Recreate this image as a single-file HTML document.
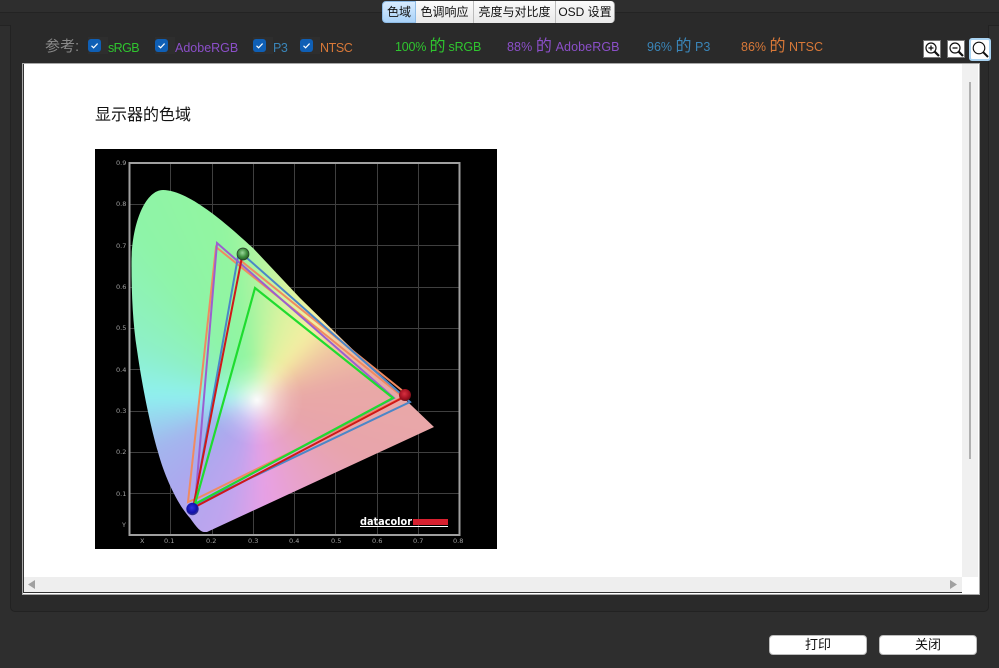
<!DOCTYPE html>
<html lang="zh"><head><meta charset="utf-8"><title>色域</title>
<style>
html,body{margin:0;padding:0;width:999px;height:668px;overflow:hidden;background:#2e2e2e}
*{box-sizing:border-box}
body{font-family:"Liberation Sans","Noto Sans CJK SC",sans-serif;position:relative}
.a{position:absolute}
.t{position:absolute;white-space:nowrap;line-height:16px;font-size:12.5px}
.t b{font-weight:400;font-size:16px}
.halo{position:absolute;top:37px;width:20px;height:17px;background:#2e2e2e}
.cb{position:absolute;top:39px;width:13px;height:13px;background:#0f5fb5;border-radius:3px}
.cb svg{position:absolute;left:0;top:0}
.tab{position:absolute;top:1px;height:22px;background:linear-gradient(#fbfbfb,#e9e9e9);border-right:1px solid #bbb;color:#111;font-size:12px;line-height:22px;text-align:center;white-space:nowrap}
.btn{position:absolute;top:635px;width:98px;height:20px;background:#fff;border:1px solid #bdbdbd;border-radius:4px;color:#111;font-size:13px;line-height:18px;text-align:center}
.zb{position:absolute;background:#fff;border:1px solid #777}
</style></head><body>

<div class="a" style="left:0;top:12px;width:999px;height:14px;background:#2a2a2a;border-top:1px solid #232323;border-bottom:1px solid #232323"></div>
<div class="a" style="left:10px;top:25px;width:979px;height:587px;background:#2a2a2a;border:1px solid #222;border-top:none;border-radius:0 0 5px 5px"></div>

<div class="tab" style="left:382px;width:34px;background:linear-gradient(#d8ecff,#a9d2f8);border:1px solid #8fbce6;border-radius:4px 0 0 4px;line-height:20px">色域</div>
<div class="tab" style="left:416px;width:58px">色调响应</div>
<div class="tab" style="left:474px;width:82px">亮度与对比度</div>
<div class="tab" style="left:556px;width:59px;border-radius:0 4px 4px 0;border-right:1px solid #999">OSD 设置</div>

<div class="t" style="left:45px;top:39px;font-size:15px;color:#8a8a8a">参考:</div>
<div class="halo" style="left:88px"></div><div class="halo" style="left:155px"></div><div class="halo" style="left:253px"></div><div class="halo" style="left:300px"></div>
<div class="cb" style="left:88px"><svg width="13" height="13"><path d="M3.500 6.800 5.600 8.800 9.600 4.600" fill="none" stroke="#fff" stroke-width="1.200"/></svg></div>
<div class="t" style="left:108px;top:40px;color:#2fc52f;letter-spacing:-.6px">sRGB</div>
<div class="cb" style="left:155px"><svg width="13" height="13"><path d="M3.500 6.800 5.600 8.800 9.600 4.600" fill="none" stroke="#fff" stroke-width="1.200"/></svg></div>
<div class="t" style="left:175px;top:40px;color:#8b4fc8">AdobeRGB</div>
<div class="cb" style="left:253px"><svg width="13" height="13"><path d="M3.500 6.800 5.600 8.800 9.600 4.600" fill="none" stroke="#fff" stroke-width="1.200"/></svg></div>
<div class="t" style="left:273px;top:40px;color:#3a85b8;letter-spacing:-.4px">P3</div>
<div class="cb" style="left:300px"><svg width="13" height="13"><path d="M3.500 6.800 5.600 8.800 9.600 4.600" fill="none" stroke="#fff" stroke-width="1.200"/></svg></div>
<div class="t" style="left:320px;top:40px;color:#d87838;letter-spacing:-.4px">NTSC</div>

<div class="t" style="left:395px;top:39px;color:#2fc52f;letter-spacing:-.2px">100% <b>的</b> sRGB</div>
<div class="t" style="left:507px;top:39px;color:#8b4fc8;letter-spacing:.1px">88% <b>的</b> AdobeRGB</div>
<div class="t" style="left:647px;top:39px;color:#3a85b8">96% <b>的</b> P3</div>
<div class="t" style="left:741px;top:39px;color:#d87838">86% <b>的</b> NTSC</div>

<div class="zb" style="left:923px;top:40px;width:18px;height:18px"><svg width="16" height="16" style="display:block"><circle cx="7" cy="7" r="5" fill="none" stroke="#111" stroke-width="1.200"/><path d="M4.500 7h5M7 4.500v5" stroke="#111" stroke-width="1.300"/><path d="M10.700 10.700l4.300 4.300" stroke="#111" stroke-width="2.200"/></svg></div>
<div class="zb" style="left:947px;top:40px;width:18px;height:18px"><svg width="16" height="16" style="display:block"><circle cx="7" cy="7" r="5" fill="none" stroke="#111" stroke-width="1.200"/><path d="M4.500 7h5" stroke="#111" stroke-width="1.300"/><path d="M10.700 10.700l4.300 4.300" stroke="#111" stroke-width="2.200"/></svg></div>
<div class="a" style="left:969px;top:38px;width:22px;height:23px;background:#fff;border:2px solid #a9d3f2;border-radius:3px"><svg width="18" height="19" style="display:block"><circle cx="8" cy="8" r="5.800" fill="none" stroke="#111" stroke-width="1.100"/><path d="M12.200 12.200l4.800 4.800" stroke="#111" stroke-width="2"/></svg></div>

<!-- view -->
<div class="a" style="left:22px;top:63px;width:958px;height:532px;background:#fff;border:1px solid #a8a8a8"></div>
<div class="a" style="left:23px;top:64px;width:1px;height:529px;background:#333"></div>
<div class="a" style="left:962px;top:64px;width:16px;height:513px;background:#f0f0f0"></div>
<div class="a" style="left:969px;top:82px;width:2px;height:377px;background:#b0b0b0"></div>
<div class="a" style="left:24px;top:577px;width:938px;height:15px;background:#eeeeee"></div>
<div class="a" style="left:24px;top:592px;width:938px;height:1px;background:#333"></div>
<svg class="a" style="left:24px;top:577px" width="938" height="15"><path d="M4 7.500 11 3V12Z" fill="#a0a0a0"/><path d="M933 7.500 926 3V12Z" fill="#a0a0a0"/></svg>

<div class="a" style="left:95px;top:106px;font-size:16px;line-height:20px;color:#111;white-space:nowrap">显示器的色域</div>

<!-- chart -->
<div class="a" style="left:95px;top:149px;width:402px;height:400px;background:#000"></div>
<svg class="a" style="left:0;top:0;filter:blur(.35px)" width="999" height="668">
<g stroke="#3f3f3f" stroke-width="1" fill="none">
<path d="M170.500 163V534M212.500 163V534M253.500 163V534M294.500 163V534M335.500 163V534M377.500 163V534M418.500 163V534"/>
<path d="M130 204.500H459M130 245.500H459M130 287.500H459M130 328.500H459M130 369.500H459M130 411.500H459M130 452.500H459M130 493.500H459"/>
</g>
<rect x="129.500" y="163" width="330" height="372" fill="none" stroke="#a0a0a0" stroke-width="2"/>
<g font-family="DejaVu Sans,sans-serif" font-size="6.500" fill="#a0a0a0">
<text x="116" y="165">0.9</text><text x="116" y="206">0.8</text><text x="116" y="248">0.7</text><text x="116" y="289">0.6</text><text x="116" y="330">0.5</text><text x="116" y="372">0.4</text><text x="116" y="413">0.3</text><text x="116" y="454">0.2</text><text x="116" y="496">0.1</text><text x="122" y="527">Y</text>
<text x="140" y="543">X</text><text x="164" y="543">0.1</text><text x="206" y="543">0.2</text><text x="248" y="543">0.3</text><text x="289" y="543">0.4</text><text x="331" y="543">0.5</text><text x="372" y="543">0.6</text><text x="413" y="543">0.7</text><text x="453" y="543">0.8</text>
</g>
</svg>

<div class="a" style="left:0;top:0;width:999px;height:668px;clip-path:path('M207 532 L434 427 L345 342 L300 298 L253 248 C232 229 190 190 163 190 C145 190 131 225 131.500 265 C131.500 295 133 325 137 350 C142 385 150 425 158 452 C165 478 178 505 190 518 C195 525 200 532 204 532 Z')">
<div class="a" style="left:60px;top:120px;width:460px;height:480px;filter:blur(7px);background:conic-gradient(from 0deg at 197px 280px,#b0f4a0 0deg,#d8f3a0 15deg,#f5eea2 38deg,#efc4a2 58deg,#e9a9a6 80deg,#e8a4ac 120deg,#e8a2cc 155deg,#e8a0e6 176deg,#c0a4ee 195deg,#aca8ee 222deg,#a3b6ee 245deg,#8ff0f0 272deg,#8ef0c8 295deg,#8ef4a8 325deg,#92f5a0 350deg,#b0f4a0 360deg)"></div>
<div class="a" style="left:0;top:0;width:999px;height:668px;background:radial-gradient(circle 46px at 257px 400px,rgba(255,255,255,.95) 0,rgba(255,255,255,.65) 20%,rgba(255,255,255,.32) 48%,rgba(255,255,255,.1) 75%,rgba(255,255,255,0) 100%)"></div>
</div>

<svg class="a" style="left:0;top:0;filter:blur(.35px)" width="999" height="668">
<defs>
<radialGradient id="gb" cx=".45" cy=".4" r=".6"><stop offset="0" stop-color="#9ad89a"/><stop offset=".6" stop-color="#3d8f3d"/><stop offset="1" stop-color="#245a24"/></radialGradient>
<radialGradient id="rb" cx=".45" cy=".4" r=".6"><stop offset="0" stop-color="#d83040"/><stop offset=".7" stop-color="#a01020"/><stop offset="1" stop-color="#701018"/></radialGradient>
<radialGradient id="bb" cx=".45" cy=".4" r=".6"><stop offset="0" stop-color="#3030e0"/><stop offset=".7" stop-color="#1010a8"/><stop offset="1" stop-color="#383890"/></radialGradient>
</defs>
<g fill="none" stroke-width="2" stroke-linejoin="miter">
<path d="M216 247 L403 397 L200 497 L188 502 Z" stroke="#f08a60"/>
<path d="M240 260 L404 392" stroke="#f08a60"/>
<path d="M410 402 L239 251 L194 505 Z" stroke="#4a86c8"/>
<path d="M217 243 L394 398 L195 504 Z" stroke="#9b5fd0"/>
<path d="M242 257 L193 508 L404 397" stroke="#d01818"/>
<path d="M255 288 L393 398 L195 504 Z" stroke="#1fdc2f" stroke-width="2.200"/>
</g>
<circle cx="243" cy="254" r="6" fill="url(#gb)" stroke="#2a3a2a" stroke-width=".7"/>
<circle cx="405" cy="395" r="6" fill="url(#rb)"/>
<circle cx="192.500" cy="509" r="6.200" fill="url(#bb)"/>
<text x="360" y="525" font-family="DejaVu Sans,sans-serif" font-size="10.500" font-weight="700" fill="#fff" textLength="52" lengthAdjust="spacingAndGlyphs">datacolor</text>
<rect x="413" y="519" width="35" height="6" fill="#d7202f"/>
<rect x="360" y="526" width="88" height="1" fill="#fff"/>
</svg>

<div class="btn" style="left:769px">打印</div>
<div class="btn" style="left:879px">关闭</div>
</body></html>
